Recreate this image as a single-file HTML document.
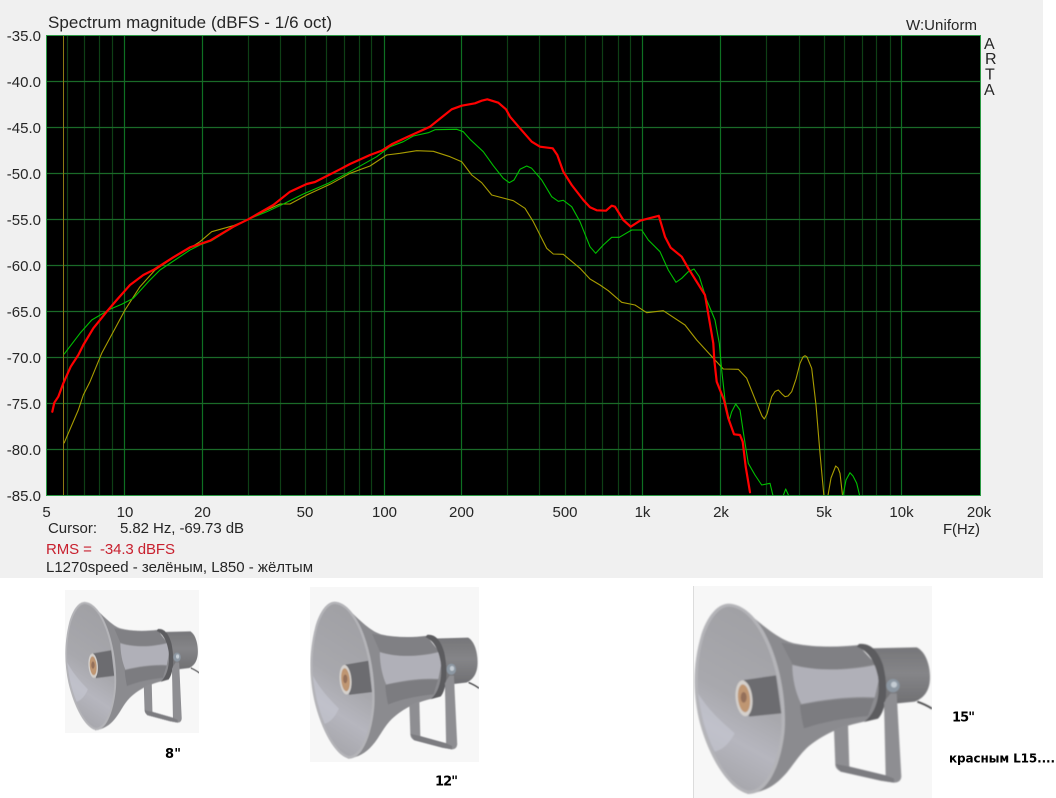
<!DOCTYPE html>
<html>
<head>
<meta charset="utf-8">
<style>
html,body{margin:0;padding:0;background:#fff;width:1056px;height:798px;overflow:hidden}
svg{display:block}
text{font-family:"Liberation Sans","DejaVu Sans",sans-serif;fill:#262626;font-size:15px}
.b{font-family:"DejaVu Sans","Liberation Sans",sans-serif;font-weight:bold;fill:#000;font-size:13px}
</style>
</head>
<body>
<svg width="1056" height="798" viewBox="0 0 1056 798" xmlns="http://www.w3.org/2000/svg">
<defs>
<linearGradient id="mouth" x1="0.6" y1="0" x2="0.35" y2="1">
<stop offset="0" stop-color="#a0a0a4"/><stop offset=".5" stop-color="#a8a8ad"/><stop offset=".72" stop-color="#b6b6be"/><stop offset="1" stop-color="#a4a4a9"/>
</linearGradient>
<linearGradient id="cyl" x1="0" y1="0" x2="0" y2="1">
<stop offset="0" stop-color="#767679"/><stop offset=".45" stop-color="#858588"/><stop offset="1" stop-color="#6e6e71"/>
</linearGradient>
<filter id="soft" x="-5%" y="-5%" width="110%" height="110%"><feGaussianBlur stdDeviation="2"/></filter>
<clipPath id="plotclip"><rect x="47" y="36" width="933" height="459"/></clipPath>
<symbol id="horn" viewBox="0 -12 714 636" preserveAspectRatio="none">
<rect x="0" y="-12" width="714" height="636" fill="#f7f7f7"/>
<g filter="url(#soft)">
<path d="M670,335 C690,342 702,348 714,356" fill="none" stroke="#38383a" stroke-width="5"/>
<path d="M530,175 L668,172 C695,185 708,225 708,262 C708,295 695,322 662,335 L560,345 Z" fill="url(#cyl)"/>
<path d="M150,60 C195,95 250,148 300,160 C360,172 430,172 495,165 L550,240 L560,375 L510,395 C450,408 400,425 345,468 C310,498 290,540 262,565 C235,592 205,606 160,612 Z" fill="#8b8b8f"/>
<path d="M295,222 C350,240 430,245 545,222 L495,168 C430,172 360,172 300,164 L262,158 Z" fill="#808084"/>
<path d="M295,225 C360,242 450,245 545,225 L556,262 L542,322 C480,318 400,326 322,342 C305,310 295,265 295,225 Z" fill="#b0b0b8"/>
<path d="M318,345 C400,330 480,322 540,326 L522,378 C450,385 390,395 330,415 C325,395 320,370 318,345 Z" fill="#7c7c80"/>
<path d="M420,418 L462,402 L466,530 L575,556 L570,335 L590,310 L608,310 L622,560 Q620,578 600,578 L560,572 L440,545 Q425,537 424,525 Z" fill="#8e8e92"/>
<path d="M424,522 L440,545 L560,572 L600,578 L600,566 L575,556 L466,530 Z" fill="#7c7c80"/>
<path d="M495,162 C527,158 552,180 567,225 C584,290 578,360 552,386 L510,396 C545,370 560,320 552,260 C542,210 520,182 488,170 Z" fill="#5c5c5f"/>
<path d="M570,338 L590,312 L608,312 L612,420 L574,420 Z" fill="#8e8e92"/>
<circle cx="597" cy="287" r="20" fill="#8c97a2"/><circle cx="600" cy="284" r="9" fill="#c4ccd3"/>
<path d="M105,41 C152,43 197,90 227,160 C262,240 277,340 272,420 C264,510 227,612 165,612 C108,602 48,510 18,400 C-2,320 -7,230 23,130 C43,73 73,41 105,41 Z" fill="#b4b4b8"/>
<path d="M105,50 C148,52 188,95 218,165 C252,245 266,340 262,418 C254,505 220,600 165,602 C115,594 55,505 27,398 C8,320 2,232 31,134 C50,82 78,50 105,50 Z" fill="url(#mouth)"/>
<path d="M12,310 C50,370 90,400 122,430 C100,470 80,480 62,485 C35,430 20,370 12,310 Z" fill="#c9cad6" opacity=".55"/>
<path d="M150,270 L246,256 L262,370 L165,380 Z" fill="#6c6c6f"/>
<ellipse cx="150" cy="325" rx="25" ry="54" transform="rotate(-6 150 325)" fill="#d4d0cc"/>
<ellipse cx="150" cy="325" rx="18" ry="42" transform="rotate(-6 150 325)" fill="#bf9672"/>
<ellipse cx="149" cy="322" rx="9" ry="16" fill="#94705a"/>
</g>
</symbol>
</defs>

<rect x="0" y="0" width="1043" height="578" fill="#f0f0f0"/>
<rect x="46.5" y="35.5" width="934" height="460" fill="#000"/>

<!-- minor verticals -->
<path d="M67.5 36V495M84.5 36V495M99.5 36V495M112.5 36V495M248.5 36V495M280.5 36V495M305.5 36V495M326.5 36V495M344.5 36V495M359.5 36V495M371.5 36V495M507.5 36V495M539.5 36V495M565.5 36V495M585.5 36V495M602.5 36V495M618.5 36V495M630.5 36V495M766.5 36V495M799.5 36V495M824.5 36V495M844.5 36V495M862.5 36V495M876.5 36V495M890.5 36V495" stroke="#0e3f15" stroke-width="1.2" fill="none"/>
<!-- major verticals -->
<path d="M124.5 36V495M202.5 36V495M384.5 36V495M461.5 36V495M642.5 36V495M720.5 36V495M901.5 36V495" stroke="#0e7022" stroke-width="1.2" fill="none"/>
<!-- horizontals -->
<path d="M47 81.5H980M47 127.5H980M47 173.5H980M47 219.5H980M47 265.5H980M47 311.5H980M47 357.5H980M47 403.5H980M47 449.5H980" stroke="#1a6a28" stroke-width="1.2" fill="none"/>
<!-- cursor -->
<path d="M63.5 36V495" stroke="#8c7a14" stroke-width="1" fill="none"/>
<!-- border -->
<rect x="46.5" y="35.5" width="934" height="460" fill="none" stroke="#2d9a45" stroke-width="1"/>

<g fill="none" stroke-linejoin="round" clip-path="url(#plotclip)">
<!-- yellow -->
<polyline stroke="#a89c00" stroke-width="1.1" points="64,443.3 78.3,410 83.3,395 90,381.7 101.7,353.3 113.3,331.7 125,310 140,286.7 155,270 173,258 190,248 200,241.7 211.7,231.7 233.3,225.7 248.3,219.3 266.7,210 280,204 290,204 306.7,195 330,184.3 350,173.3 370,166 386.7,155 400,153.3 416.7,150.7 433.3,151.3 450,156.7 461.7,161.7 471.7,175 481.7,182.7 491.7,195 513.3,200.7 525,208.3 533.3,221.7 546.7,248.3 553.3,254 563.3,254.3 580,268.3 590,279 600,285 608.3,290.7 621.7,302.3 635,305 646.7,312.7 663.3,310.7 685,325 696.7,340 715,360 723.3,369 738.3,369.3 746.7,378.3 756.7,403.3 762,416 764.3,419 767,414 771.7,396.7 775,391.5 778.3,390 782,394 785,396.7 788,396 791.7,391.7 796,379 800,363.3 803,357 805,355.7 807,357 811.7,368.3 816,405 820,453.3 824,497 827.7,497 831,478 835.7,466 838,468 840,473.3 842.7,497"/>
<!-- green -->
<polyline stroke="#00c000" stroke-width="1.1" points="64,354.3 80,333.3 91.7,320 110,309.3 121.7,304.3 133.3,298.3 148.3,281.7 160,270 190,250 200,245 211.7,240.7 233.3,227.3 248.3,219.3 266.7,211.7 283.3,204 303.3,194 328.3,183.3 350,171.7 376.7,156.7 390,146.7 403.3,141.7 413.3,136 428.3,132.7 435,129.7 456.7,129.3 463.3,131.7 470,139.3 483.3,151.7 493.3,165.7 503.3,178.3 509.3,182.7 514,180 520,169.3 526.7,166 531.7,168.3 541.7,180 551.7,196.7 558.3,201.3 563.3,200.3 571.7,206.7 580,221.7 590,246.7 595.7,253.3 603.3,245 611.7,237.3 619.3,237.3 631.7,230 641.7,230 648.3,240 660,251.7 668.3,270 676,282.3 681.7,278.3 688.3,271.7 694,269 699.3,276.7 706.7,300 715,320 719.3,343.3 721.7,370 725,400 729.3,420 731.7,411.7 735.7,404 740,410 744,436.7 748.3,463.3 755,475 761.7,485 770,483.3 773.3,497"/>
<polyline stroke="#00c000" stroke-width="1.1" points="782.7,497 785.7,489 789.3,497"/>
<polyline stroke="#00c000" stroke-width="1.1" points="842.7,497 846,480 850,472.7 853,476 856.7,483.3 860,497"/>
<!-- red -->
<polyline stroke="#ff0000" stroke-width="2.2" stroke-linecap="round" points="52.3,411.7 54.3,402.7 58.3,396.7 63.3,383.3 70.7,366.7 78.3,355 83.3,345 93.3,328.3 106.7,311.7 116.7,300 130,285 143.3,275 153.3,270 173.3,257.3 190,247.3 210,240.7 233.3,226.7 248.3,219.3 273.3,205 290,191.7 306.7,184 315,182 340,169.3 350,164 370,155 381.7,150.7 391.7,144.3 406.7,137.3 430,126.7 438.3,120 451.7,109.3 461.7,105.7 475,103.3 481.7,100.7 487.3,99.3 498.3,102.7 506,109.3 510,116.7 520,128.3 531.7,141.7 540,146.7 552.7,148.3 557.3,155 563.3,171.7 571.7,185 583.3,200 590,207.3 596.7,210.3 606,210.7 611.7,205.7 615,206.7 623.3,220 630.7,226.7 640,220.7 658.8,215.8 665,236.7 670.7,247.7 681.7,256.7 688.3,268.3 705,295 709.3,320 713.3,343.3 714.3,360 716.7,381.7 724,400 728.3,418.3 734,434.3 740,435 742.7,441.7 745.7,466.7 750,492.3"/>
</g>

<!-- title -->
<text x="48" y="28" style="font-size:17px" textLength="284" lengthAdjust="spacing">Spectrum magnitude (dBFS - 1/6 oct)</text>
<text x="906" y="30" textLength="71" lengthAdjust="spacing">W:Uniform</text>
<text x="984" y="49" style="font-size:16px">A</text>
<text x="985" y="64" style="font-size:16px">R</text>
<text x="985" y="79.5" style="font-size:16px">T</text>
<text x="984" y="95" style="font-size:16px">A</text>

<!-- y labels -->
<g text-anchor="end">
<text x="41" y="41">-35.0</text>
<text x="41" y="87">-40.0</text>
<text x="41" y="133">-45.0</text>
<text x="41" y="179">-50.0</text>
<text x="41" y="225">-55.0</text>
<text x="41" y="271">-60.0</text>
<text x="41" y="317">-65.0</text>
<text x="41" y="363">-70.0</text>
<text x="41" y="409">-75.0</text>
<text x="41" y="455">-80.0</text>
<text x="41" y="501">-85.0</text>
</g>

<!-- x labels -->
<g text-anchor="middle">
<text x="46.5" y="517">5</text>
<text x="125" y="517">10</text>
<text x="202.5" y="517">20</text>
<text x="305" y="517">50</text>
<text x="384.5" y="517">100</text>
<text x="461.5" y="517">200</text>
<text x="565" y="517">500</text>
<text x="642.5" y="517">1k</text>
<text x="721" y="517">2k</text>
<text x="824" y="517">5k</text>
<text x="901.5" y="517">10k</text>
<text x="979" y="517">20k</text>
</g>

<text x="943" y="534" textLength="37" lengthAdjust="spacing">F(Hz)</text>
<text x="48" y="533" textLength="49" lengthAdjust="spacing">Cursor:</text>
<text x="120" y="533" textLength="124" lengthAdjust="spacing">5.82 Hz, -69.73 dB</text>
<text x="46" y="554" style="fill:#c8202e;white-space:pre" textLength="129" lengthAdjust="spacing">RMS =  -34.3 dBFS</text>
<text x="46" y="572" textLength="267" lengthAdjust="spacing">L1270speed - зелёным, L850 - жёлтым</text>

<!-- horns -->
<use href="#horn" x="65" y="590" width="134" height="143"/>
<use href="#horn" x="310" y="587" width="169" height="175"/>
<rect x="693" y="586" width="1" height="212" fill="#dcdcdc"/>
<use href="#horn" x="694" y="586" width="238" height="212"/>

<text class="b" x="165" y="758" textLength="16" lengthAdjust="spacing">8"</text>
<text class="b" x="435" y="785.5" textLength="23" lengthAdjust="spacing">12"</text>
<text class="b" x="952" y="721.5" textLength="23" lengthAdjust="spacing">15"</text>
<text class="b" x="949" y="762.5" style="font-size:12px" textLength="106" lengthAdjust="spacing">красным L15....</text>
</svg>
</body>
</html>
